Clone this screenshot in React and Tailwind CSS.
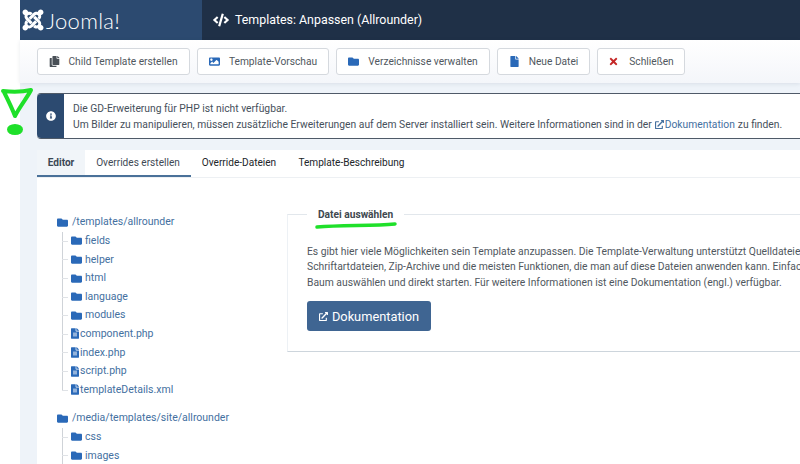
import React from 'react';
import {
  FaJoomla,
  FaCode,
  FaCopy,
  FaImage,
  FaFolder,
  FaFile,
  FaFileAlt,
  FaTimes,
  FaInfoCircle,
  FaExternalLinkAlt,
} from 'react-icons/fa';

const toolbar = [
  { label: 'Child Template erstellen', Icon: FaCopy, color: 'text-[#495057]', width: 'w-[153px]', gap: 'gap-[8px]' },
  { label: 'Template-Vorschau', Icon: FaImage, color: 'text-[#2a69b8]', width: 'w-[132px]', gap: 'gap-[9px]' },
  { label: 'Verzeichnisse verwalten', Icon: FaFolder, color: 'text-[#2a69b8]', width: 'w-[154px]', gap: 'gap-[9px]' },
  { label: 'Neue Datei', Icon: FaFile, color: 'text-[#2a69b8]', width: 'w-[93px]', gap: 'gap-[9px]' },
  { label: 'Schließen', Icon: FaTimes, color: 'text-[#c52827]', width: 'w-[88px]', gap: 'gap-[10px]' },
];

const tabs = [
  { label: 'Editor', className: 'w-[48px] bg-[#f1f5f9] font-bold text-[#3b4754] border-[#4a7199]' },
  { label: 'Overrides erstellen', className: 'w-[106px] text-[#3f4a55] border-[#4a7199]' },
  { label: 'Override-Dateien', className: 'w-[96px] text-[#22262a] border-transparent' },
  { label: 'Template-Beschreibung', className: 'w-[129px] text-[#22262a] border-transparent' },
];

const firstTree = [
  { name: 'fields', folder: true },
  { name: 'helper', folder: true },
  { name: 'html', folder: true },
  { name: 'language', folder: true },
  { name: 'modules', folder: true },
  { name: 'component.php' },
  { name: 'index.php' },
  { name: 'script.php' },
  { name: 'templateDetails.xml' },
];

const secondTree = [
  { name: 'css', folder: true },
  { name: 'images', folder: true },
];

const TreeRow = ({ name, folder, last }) => (
  <li className="flex h-[18.6px] items-stretch">
    <div className="relative w-[9px] shrink-0">
      <div className={`absolute left-0 top-0 w-px bg-[#cfd3d8] ${last ? 'h-1/2' : 'h-full'}`} />
      <div className="absolute left-0 top-1/2 h-px w-[6px] bg-[#dfe2e6]" />
    </div>
    {folder ? (
      <div className="flex items-center gap-[3px]">
        <FaFolder className="h-[11px] w-[11px] text-[#2a69b8]" />
        <span className="text-[#44709f]">{name}</span>
      </div>
    ) : (
      <div className="flex items-center gap-[1px]">
        <FaFileAlt className="h-[11px] w-[8px] text-[#2a69b8]" />
        <span className="text-[#44709f]">{name}</span>
      </div>
    )}
  </li>
);

const Tree = ({ root, items }) => (
  <div>
    <div className="flex h-[18.6px] items-center gap-[4px]">
      <FaFolder className="h-[11px] w-[11px] text-[#2a69b8]" />
      <span className="text-[#44709f]">{root}</span>
    </div>
    <ul className="ml-[5px]">
      {items.map((item, i) => (
        <TreeRow key={item.name} {...item} last={i === items.length - 1 && items.length > 2} />
      ))}
    </ul>
  </div>
);

export default function App() {
  return (
    <div className="relative h-[464px] w-[800px] overflow-hidden bg-white pl-[20px] font-['Roboto',sans-serif]">
      <div className="flex h-full flex-col bg-[#eef3f9]">
        {/* Header */}
        <header className="flex h-[40px] shrink-0">
          <div className="flex w-[182px] items-center gap-[1px] bg-[#2c4a70] pl-[1px] text-white">
            <FaJoomla className="h-[24px] w-[24px]" />
            <span className="font-['Lato',sans-serif] text-[22px] font-light tracking-[0.3px]">Joomla!</span>
          </div>
          <div className="flex flex-1 items-center gap-[6px] bg-[#1f3047] pl-[11px] text-[12.4px] text-white">
            <FaCode className="h-[14px] w-[16px]" />
            <span>Templates: Anpassen (Allrounder)</span>
          </div>
        </header>

        {/* Toolbar */}
        <div className="flex h-[43px] shrink-0 gap-[7px] bg-gradient-to-b from-white to-[#f4f6fa] pl-[17px] pt-[8px] shadow-[0_1px_4px_rgba(30,50,80,0.1)]">
          {toolbar.map(({ label, Icon, color, width, gap }) => (
            <button
              key={label}
              className={`flex h-[27px] items-center justify-center rounded-[3px] border border-[#d5d9de] bg-white text-[10.2px] text-[#50575e] ${width} ${gap}`}
            >
              <Icon className={`h-[11px] w-[11px] ${color}`} />
              <span>{label}</span>
            </button>
          ))}
        </div>

        {/* Alert */}
        <div className="ml-[17px] mt-[10px] flex h-[46px] shrink-0 rounded-l-[4px] border-y border-[#4f5a68] bg-white">
          <div className="flex w-[27px] shrink-0 items-center justify-center rounded-l-[4px] bg-[#2c4a70] text-white">
            <FaInfoCircle className="h-[10px] w-[10px]" />
          </div>
          <div className="whitespace-nowrap pl-[9px] pt-[7px] text-[10.3px] leading-[15.5px] text-[#46505b]">
            <p>Die GD-Erweiterung für PHP ist nicht verfügbar.</p>
            <p className="flex items-center">
              Um Bilder zu manipulieren, müssen zusätzliche Erweiterungen auf dem Server installiert sein. Weitere Informationen sind in der
              <FaExternalLinkAlt className="ml-[3px] mr-[1px] h-[9px] w-[9px] text-[#44709f]" />
              <span className="text-[#44709f]">Dokumentation</span>
              <span className="ml-[3px]">zu finden.</span>
            </p>
          </div>
        </div>

        {/* Panel */}
        <main className="ml-[17px] mt-[11px] flex-1 bg-white">
          <nav className="flex h-[28px] border-b border-[#edf0f3]">
            {tabs.map(({ label, className }) => (
              <div
                key={label}
                className={`flex h-[27px] items-center justify-center border-b-2 text-[10.1px] ${className}`}
              >
                {label}
              </div>
            ))}
          </nav>

          <div className="flex pt-[34px]">
            <div className="flex w-[250px] shrink-0 flex-col gap-[10px] pl-[20px] pt-[1px] text-[10.5px]">
              <Tree root="/templates/allrounder" items={firstTree} />
              <Tree root="/media/templates/site/allrounder" items={secondTree} />
            </div>

            <section className="relative mt-[2px] h-[138px] w-[700px] shrink-0 border-b border-l border-t border-b-[#cdd5dc] border-l-[#edf1f5] border-t-[#e2e7ec] pl-[19px] pt-[29px]">
              <div className="absolute left-[19px] top-[-7px] bg-white px-[11px] text-[10.2px] font-bold leading-[14px] text-[#40484f]">
                Datei auswählen
              </div>
              <p className="whitespace-nowrap text-[10.33px] leading-[15.4px] text-[#50575e]">
                Es gibt hier viele Möglichkeiten sein Template anzupassen. Die Template-Verwaltung unterstützt Quelldateien, Bilder,
                <br />
                Schriftartdateien, Zip-Archive und die meisten Funktionen, die man auf diese Dateien anwenden kann. Einfach eine Datei im
                <br />
                Baum auswählen und direkt starten. Für weitere Informationen ist eine Dokumentation (engl.) verfügbar.
              </p>
              <button className="mt-[11px] flex h-[30px] w-[124px] items-center justify-center gap-[4px] rounded-[3px] bg-[#3f6592] text-[12.8px] text-white">
                <FaExternalLinkAlt className="h-[9px] w-[9px]" />
                Dokumentation
              </button>
            </section>
          </div>
        </main>
      </div>

      {/* Green marker scribbles drawn over the page */}
      <svg className="absolute left-0 top-0 h-[140px] w-[40px]" viewBox="0 0 40 140" fill="none">
        <path
          d="M3 91 C12 92 22 92 31 90 C27 98 20 106 15 116 C12 108 8 100 4 92"
          stroke="#1fe02a"
          strokeWidth="4"
          strokeLinecap="round"
          strokeLinejoin="round"
        />
        <ellipse cx="15" cy="129.5" rx="8" ry="5.5" fill="#1fe02a" />
      </svg>
      <svg className="absolute left-[312px] top-[218px] h-[14px] w-[90px]" viewBox="0 0 90 14" fill="none">
        <path d="M5 9 C30 7 60 8 83 6" stroke="#1fe02a" strokeWidth="3.5" strokeLinecap="round" />
      </svg>
    </div>
  );
}
